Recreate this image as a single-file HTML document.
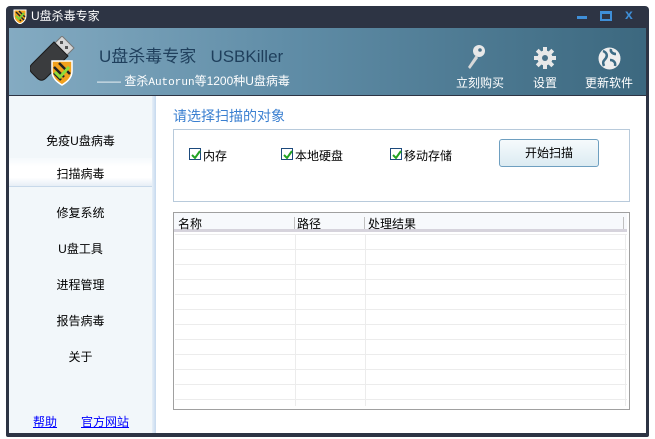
<!DOCTYPE html>
<html><head><meta charset="utf-8"><style>
*{margin:0;padding:0;box-sizing:border-box}
body{width:655px;height:439px;background:#fff;position:relative;overflow:hidden;font-family:"Liberation Sans","Noto Sans CJK SC",sans-serif;font-size:12px}
.abs{position:absolute}
#frame{left:6px;top:6px;width:643px;height:431px;background:#2d3444;border-radius:4px 4px 2px 2px}
#title{left:10px;top:7px;color:#fff;font-size:12px}
#banner{left:9px;top:28px;width:637px;height:67px;background:linear-gradient(90deg,#84abc2 0%,#5f8ca6 45%,#3c687f 100%)}
#content{left:9px;top:96px;width:637px;height:337px;background:#fff}
#side{left:9px;top:96px;width:146px;height:337px;background:#f2f7fa;border-right:3px solid #c9dcef}
.it{position:absolute;left:9px;width:143px;text-align:center;font-size:12px;color:#000}
.sel{background:linear-gradient(#f5f9fc,#fff 30%,#fff 70%,#e6eef6);border-bottom:1px solid #c8d9ea}
a{color:#00f;text-decoration:underline}
.cb{position:absolute;width:12px;height:12px;border:1px solid #1d4a7c;background:#fff}
.cb svg{position:absolute;left:1px;top:1px}
.lbl{position:absolute;font-size:12px}
.hl{position:absolute;height:1px;background:#ececec;left:175px;width:452px}
.vl{position:absolute;width:1px;background:#ececec;top:234px;height:172px}
</style></head><body>
<div id="frame" class="abs"></div>
<svg class="abs" style="left:13px;top:9px" width="14" height="15" viewBox="0 0 14 15"><path d="M1 1h12v6c0 4-3 6.5-6 8-3-1.5-6-4-6-8z" fill="#f1a21e" stroke="#fff" stroke-width="1"/><path d="M3 3l8 8M3 7l5 5M6 2l6 6" stroke="#222" stroke-width="1.5"/><path d="M3 7l3 3 5-6" stroke="#7ad03a" stroke-width="2" fill="none"/></svg>
<div id="title" class="abs" style="left:31px">U盘杀毒专家</div>
<div class="abs" style="left:577px;top:16px;width:10px;height:3px;background:#3f8fd8"></div>
<div class="abs" style="left:600px;top:11px;width:12px;height:10px;border:2px solid #3f8fd8;border-top-width:3px"></div>
<div class="abs" style="left:625px;top:7px;color:#3f8fd8;font-weight:bold;font-size:14px;line-height:14px">x</div>
<div id="banner" class="abs"></div>
<svg class="abs" style="left:30px;top:36px" width="50" height="50" viewBox="0 0 50 50">
<path d="M24 8l8-8 12 12-8 8z" fill="#d8d8d8" stroke="#777"/><rect x="30" y="5" width="3" height="3" fill="#555"/><rect x="35" y="10" width="3" height="3" fill="#555"/>
<path d="M2 28l22-22 14 14-22 22c-3 3-6 3-9 0l-5-5c-3-3-3-6 0-9z" fill="#3a3c3e" stroke="#1a1a1a"/>
<path d="M22 25h20v10c0 7-5 11-10 14-5-3-10-7-10-14z" fill="#f2a11d" stroke="#fff" stroke-width="1.5"/>
<path d="M24 31l10 10M24 37l7 7M29 27l11 11" stroke="#222" stroke-width="2.5"/>
<path d="M25 36l5 5 9-10" stroke="#8edc3a" stroke-width="3" fill="none"/></svg>
<div class="abs" style="left:99px;top:42px;font-size:17px;color:#1f3f5c">U盘杀毒专家&nbsp;&nbsp;&nbsp;USBKiller</div>
<div class="abs" style="left:97px;top:72px;font-size:12px;color:#fff">—— 查杀<span style="font-family:'Liberation Mono',monospace;font-size:11px">Autorun</span>等1200种U盘病毒</div>
<svg class="abs" style="left:466px;top:45px" width="20" height="25" viewBox="0 0 20 25"><circle cx="13" cy="6" r="6" fill="#e8e8e8"/><circle cx="14" cy="5" r="1.8" fill="#4a7289"/><path d="M10 10l-8 12 2 2 8-11z" fill="#d8d8d8"/></svg>
<div class="abs" style="left:456px;top:74px;color:#fff">立刻购买</div>
<svg class="abs" style="left:534px;top:47px" width="22" height="22" viewBox="0 0 22 22"><g fill="#e8e8e8"><circle cx="11" cy="11" r="7.5"/><rect x="9" y="0" width="4" height="22"/><rect x="0" y="9" width="22" height="4"/><rect x="9" y="0" width="4" height="22" transform="rotate(45 11 11)"/><rect x="9" y="0" width="4" height="22" transform="rotate(-45 11 11)"/></g><circle cx="11" cy="11" r="3" fill="#4a7289"/></svg>
<div class="abs" style="left:533px;top:74px;color:#fff">设置</div>
<svg class="abs" style="left:598px;top:47px" width="23" height="23" viewBox="0 0 23 23"><circle cx="11.5" cy="11.5" r="11" fill="#eee"/><path d="M5 4c3 1 5 4 3 7s-4 3-2 8M13 2c-1 3 2 5 5 5M12 13c3 0 6 2 5 6" stroke="#3e6d86" stroke-width="2.5" fill="none"/></svg>
<div class="abs" style="left:585px;top:74px;color:#fff">更新软件</div>
<div id="content" class="abs"></div>
<div id="side" class="abs" style="border-right:none"></div>
<div class="abs" style="left:152px;top:96px;width:4px;height:337px;background:linear-gradient(90deg,#e6eff8,#c6d9ee)"></div>
<div class="it" style="top:132px">免疫U盘病毒</div>
<div class="it sel" style="top:158px;height:29px;line-height:29px;padding-top:2px">扫描病毒</div>
<div class="it" style="top:204px">修复系统</div>
<div class="it" style="top:240px">U盘工具</div>
<div class="it" style="top:276px">进程管理</div>
<div class="it" style="top:312px">报告病毒</div>
<div class="it" style="top:348px">关于</div>
<a class="abs" style="left:33px;top:413px">帮助</a>
<a class="abs" style="left:81px;top:413px">官方网站</a>
<div class="abs" style="left:173px;top:106px;font-size:14px;color:#3a7fd0">请选择扫描的对象</div>
<div class="abs" style="left:173px;top:129px;width:457px;height:73px;border:1px solid #b8cadb"></div>
<div class="cb" style="left:189px;top:148px"><svg width="10" height="10"><path d="M1 5l3 3 5-7" stroke="#23a323" stroke-width="2" fill="none"/></svg></div>
<div class="lbl" style="left:203px;top:147px">内存</div>
<div class="cb" style="left:281px;top:148px"><svg width="10" height="10"><path d="M1 5l3 3 5-7" stroke="#23a323" stroke-width="2" fill="none"/></svg></div>
<div class="lbl" style="left:295px;top:147px">本地硬盘</div>
<div class="cb" style="left:390px;top:148px"><svg width="10" height="10"><path d="M1 5l3 3 5-7" stroke="#23a323" stroke-width="2" fill="none"/></svg></div>
<div class="lbl" style="left:404px;top:147px">移动存储</div>
<div class="abs" style="left:499px;top:139px;width:100px;height:28px;border:1px solid #6e9fc0;border-radius:3px;background:linear-gradient(#f6fafc,#dcebf2);text-align:center;line-height:26px">开始扫描</div>
<div class="abs" style="left:173px;top:212px;width:457px;height:198px;border:1px solid #a0a0a0"></div>
<div class="abs" style="left:174px;top:213px;width:453px;height:19px;background:#f7f9fc;border-bottom:3px solid #d6d3dc"></div>
<div class="abs" style="left:178px;top:215px">名称</div>
<div class="abs" style="left:297px;top:215px">路径</div>
<div class="abs" style="left:368px;top:215px">处理结果</div>
<div class="abs" style="left:294px;top:217px;width:1px;height:12px;background:#c0c0c0"></div>
<div class="abs" style="left:364px;top:217px;width:1px;height:12px;background:#c0c0c0"></div>
<div class="abs" style="left:623px;top:217px;width:1px;height:12px;background:#c0c0c0"></div>
<div class="vl" style="left:295px"></div><div class="vl" style="left:365px"></div><div class="vl" style="left:625px"></div>
<div class="hl" style="top:234px"></div><div class="hl" style="top:249px"></div><div class="hl" style="top:264px"></div><div class="hl" style="top:279px"></div><div class="hl" style="top:294px"></div><div class="hl" style="top:309px"></div><div class="hl" style="top:324px"></div><div class="hl" style="top:339px"></div><div class="hl" style="top:354px"></div><div class="hl" style="top:369px"></div><div class="hl" style="top:384px"></div><div class="hl" style="top:399px"></div>
</body></html>
